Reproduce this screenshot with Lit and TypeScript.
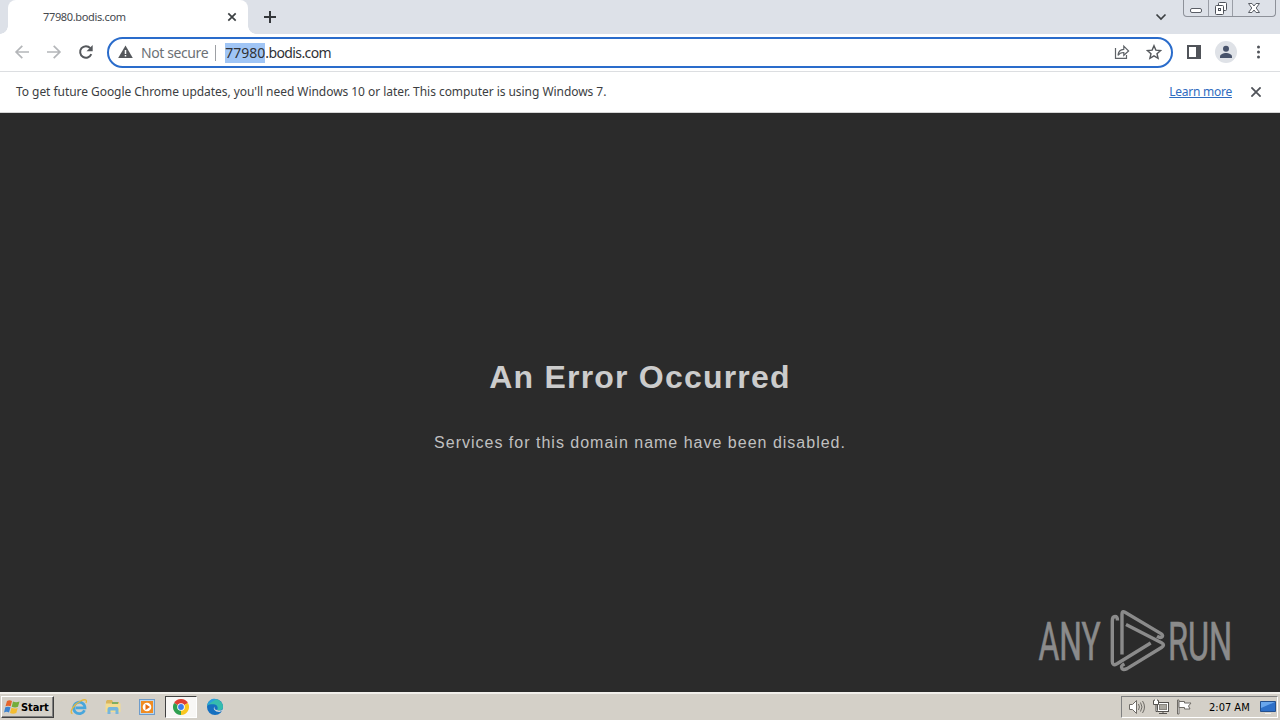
import {css, html, LitElement, svg} from "lit";
import {customElement} from "lit/decorators.js";

const HOST = "77980";
const DOMAIN = ".bodis.com";

const backIcon = svg`<path d="M15 8H2.5M8.3 1.8L2.1 8l6.2 6.2" fill="none" stroke="#b4b6b9" stroke-width="1.7"/>`;
const forwardIcon = svg`<path d="M1 8h12.5M7.7 1.8L13.9 8l-6.2 6.2" fill="none" stroke="#b4b6b9" stroke-width="1.7"/>`;
const reloadIcon = svg`
  <path d="M13.3 10.2A5.8 5.8 0 1 1 12.3 4.1" fill="none" stroke="#55585c" stroke-width="2"/>
  <path d="M14.7 1v6.2H8.5z" fill="#55585c"/>`;

@customElement("browser-tabs")
export class BrowserTabs extends LitElement {

  static styles = css`
    :host {
      display: flex;
      height: 34px;
      background: #dde1e8;
      font: 11px "Noto Sans", sans-serif;
      color: #45494e;
    }

    svg {
      display: block;
    }

    .tab {
      position: relative;
      display: flex;
      align-items: center;
      justify-content: space-between;
      box-sizing: border-box;
      width: 240px;
      margin-left: 8px;
      padding: 0 11px 0 35px;
      background: #fff;
      border-radius: 8px 8px 0 0;
      letter-spacing: -0.35px;
    }

    .tab span {
      margin-top: -2px;
    }

    /* outward curves at the foot of the tab */
    .tab::before,
    .tab::after {
      content: "";
      position: absolute;
      bottom: 0;
      width: 8px;
      height: 8px;
    }

    .tab::before {
      left: -8px;
      background: radial-gradient(circle at 0 0, #dde1e8 7.5px, #fff 8px);
    }

    .tab::after {
      right: -8px;
      background: radial-gradient(circle at 100% 0, #dde1e8 7.5px, #fff 8px);
    }

    .new-tab {
      margin: 11px 0 0 16px;
    }

    .chevron {
      margin: 13px 16px 0 auto;
    }

    .window-buttons {
      display: flex;
      box-sizing: border-box;
      width: 93px;
      height: 17px;
      margin-right: 4px;
      border: 1px solid #8d9199;
      border-top: 0;
      border-radius: 0 0 4px 4px;
    }

    .window-buttons div {
      display: flex;
      justify-content: center;
      width: 24px;
    }

    .window-buttons div + div {
      border-left: 1px solid #9a9ea6;
    }

    .window-buttons .close {
      width: 42px;
    }
  `;

  render() {
    return html`
      <div class="tab">
        <span>${HOST}${DOMAIN}</span>
        <svg width="10" height="10" viewBox="0 0 10 10">
          <path d="M1.3 1.3l7.4 7.4M8.7 1.3L1.3 8.7" stroke="#3c4043" stroke-width="1.7"/>
        </svg>
      </div>
      <svg class="new-tab" width="12" height="12" viewBox="0 0 12 12">
        <path d="M6 0v12M0 6h12" stroke="#34373b" stroke-width="2"/>
      </svg>
      <svg class="chevron" width="12" height="8" viewBox="0 0 12 8">
        <path d="M1.5 1.5L6 6l4.5-4.5" fill="none" stroke="#3c4043" stroke-width="1.7"/>
      </svg>
      <div class="window-buttons">
        <div>
          <svg width="14" height="16" viewBox="0 0 14 16">
            <rect x="1.5" y="8.5" width="11" height="4" rx="1.5" fill="#fff" stroke="#5a5e66"/>
          </svg>
        </div>
        <div>
          <svg width="14" height="16" viewBox="0 0 14 16" stroke="#4e525a">
            <rect x="4.5" y="2.5" width="8" height="8" rx="1" fill="#fff"/>
            <rect x="1.5" y="5.5" width="8" height="9" rx="1" fill="#fff"/>
            <rect x="4.5" y="8.5" width="2" height="2" fill="none"/>
          </svg>
        </div>
        <div class="close">
          <svg width="14" height="16" viewBox="0 0 14 16">
            <path d="M1.5 3.5H5L7 6l2-2.5h3.5L9.2 8l3.3 4.5H9L7 10l-2 2.5H1.5L4.8 8z"
                  fill="#fff" stroke="#5a5e66"/>
          </svg>
        </div>
      </div>
    `;
  }
}

@customElement("browser-toolbar")
export class BrowserToolbar extends LitElement {

  static styles = css`
    :host {
      display: flex;
      align-items: center;
      box-sizing: border-box;
      height: 38px;
      padding: 0 13px 0 14px;
      background: #fff;
      border-bottom: 1px solid #dcdee1;
      font: 14px "Noto Sans", sans-serif;
    }

    svg {
      display: block;
      flex: none;
    }

    .nav {
      display: flex;
      gap: 16px;
      margin: -2px 13px 0 0;
    }

    .address {
      display: flex;
      align-items: center;
      box-sizing: border-box;
      width: 1066px;
      height: 31px;
      padding: 0 9px;
      border: 2px solid #2a6ccb;
      border-radius: 16px;
      color: #303236;
    }

    .warning {
      margin: -2px 8px 0 0;
    }

    .security {
      color: #6d7175;
      letter-spacing: -0.4px;
    }

    .divider {
      width: 1px;
      height: 16px;
      margin: 0 9px 0 7px;
      background: #9da0a4;
    }

    .url {
      line-height: 20px;
      letter-spacing: -0.6px;
    }

    .selected {
      display: inline-block;
      background: #a0c5f5;
      letter-spacing: 0;
    }

    .share {
      margin: -2px 16px 0 auto;
    }

    .star {
      margin-top: -2px;
    }

    .side-panel {
      margin: -2px 14px 0;
    }

    .profile {
      margin-top: -2px;
    }

    .menu {
      margin: -1px 0 0 19px;
    }
  `;

  render() {
    return html`
      <div class="nav">
        <svg width="16" height="16" viewBox="0 0 16 16">${backIcon}</svg>
        <svg width="16" height="16" viewBox="0 0 16 16">${forwardIcon}</svg>
        <svg width="16" height="16" viewBox="0 0 16 16">${reloadIcon}</svg>
      </div>
      <div class="address">
        <svg class="warning" width="15" height="14" viewBox="0 0 15 14">
          <path d="M7.5 .5L14.8 13H.2z" fill="#55585c"/>
          <path d="M7.5 5v4M7.5 10v1.6" stroke="#fff" stroke-width="1.5"/>
        </svg>
        <span class="security">Not secure</span>
        <div class="divider"></div>
        <span class="url"><span class="selected">${HOST}</span>${DOMAIN}</span>
        <svg class="share" width="16" height="16" viewBox="0 0 16 16" fill="none" stroke="#5f6368" stroke-width="1.2">
          <path d="M1.5 4v10.4h11V11"/>
          <path d="M4 11.3C4.300 7.500 6 5.600 9.800 5.300V2.200L14.600 7l-4.800 4.300V8.500C7 8.400 5.300 9.300 4 11.300z"/>
        </svg>
        <svg class="star" width="16" height="16" viewBox="0 0 16 16">
          <path d="M8 1.700l1.850 4.400 4.800.4-3.650 3.150 1.100 4.700L8 11.850l-4.100 2.500 1.100-4.700L1.350 6.500l4.800-.4z"
                fill="none" stroke="#55585c" stroke-width="1.4"/>
        </svg>
      </div>
      <svg class="side-panel" width="14" height="14" viewBox="0 0 14 14">
        <path d="M0 0h14v14H0zM2 2v10h7V2z" fill="#505359" fill-rule="evenodd"/>
      </svg>
      <svg class="profile" width="22" height="22" viewBox="0 0 22 22">
        <circle cx="11" cy="11" r="11" fill="#dfe2e7"/>
        <circle cx="11" cy="7.8" r="3" fill="#48536b"/>
        <path d="M5 17v-1.500c0-2.300 3.500-3.500 6-3.500s6 1.200 6 3.500V17z" fill="#48536b"/>
      </svg>
      <svg class="menu" width="5" height="14" viewBox="0 0 5 14" fill="#505359">
        <circle cx="2.5" cy="2" r="1.5"/>
        <circle cx="2.5" cy="7" r="1.5"/>
        <circle cx="2.5" cy="12" r="1.5"/>
      </svg>
    `;
  }
}

@customElement("update-infobar")
export class UpdateInfobar extends LitElement {

  static styles = css`
    :host {
      display: flex;
      align-items: center;
      box-sizing: border-box;
      height: 41px;
      padding: 0 19px 1px 16px;
      background: #fff;
      border-bottom: 1px solid #d5d5d5;
      font: 12px "Noto Sans", sans-serif;
      color: #3c3e42;
    }

    .message {
      margin-top: -1px;
      letter-spacing: -0.05px;
      white-space: nowrap;
    }

    a {
      margin: -1px 19px 0 auto;
      color: #2f6cc0;
      letter-spacing: -0.25px;
      text-decoration: underline;
    }
  `;

  render() {
    return html`
      <span class="message">To get future Google Chrome updates, you'll need Windows 10 or later. This computer is using Windows 7.</span>
      <a>Learn more</a>
      <svg width="10" height="10" viewBox="0 0 10 10">
        <path d="M.4 .4l9.2 9.2M9.6 .4L.4 9.6" stroke="#505359" stroke-width="1.8"/>
      </svg>
    `;
  }
}

@customElement("error-page")
export class ErrorPage extends LitElement {

  static styles = css`
    :host {
      position: relative;
      display: flex;
      flex: 1;
      flex-direction: column;
      align-items: center;
      background: #2b2b2b;
      color: #ccc;
      font-family: "Liberation Sans", Arial, sans-serif;
    }

    h1 {
      margin: 245px 0 0;
      font-size: 32px;
      line-height: 38px;
      letter-spacing: 1.2px;
    }

    p {
      margin: 37px 0 0;
      color: #c0c0c0;
      font-size: 16px;
      line-height: 20px;
      letter-spacing: 1px;
    }

    /* sandbox watermark floats over the page */
    .watermark {
      position: absolute;
      right: 40px;
      bottom: 12px;
      overflow: visible;
      font-family: Roboto, sans-serif;
    }
  `;

  render() {
    return html`
      <h1>An Error Occurred</h1>
      <p>Services for this domain name have been disabled.</p>
      <svg class="watermark" width="210" height="80" viewBox="0 0 210 80" fill="#8b8b8b">
        <g font-size="53" stroke="#8b8b8b" stroke-width="0.7">
          <text transform="translate(8.5 60) scale(0.6 1)">ANY</text>
          <text transform="translate(138 60) scale(0.613 1)">RUN</text>
        </g>
        <g fill="none" stroke="#8b8b8b" stroke-width="3.4" stroke-linejoin="round">
          <path d="M92 54.5V14Q92 10.5 95 12.2L131 33.6Q134 35.8 131.5 37.3Q130 38 127 36.3"/>
          <path d="M96 24.4L131.5 42.8Q135.5 45 131.5 47.5L97 68.6Q92 71 91.5 67Q91.3 65.5 94.5 63.9"/>
          <path d="M120.7 43L87 63.8Q82.3 66.5 82.3 61.5V21Q82.3 16.5 85 16.5Q87.5 16.5 87.5 20.5"/>
        </g>
      </svg>
    `;
  }
}

@customElement("task-bar")
export class TaskBar extends LitElement {

  static styles = css`
    :host {
      display: flex;
      align-items: center;
      box-sizing: border-box;
      height: 28px;
      padding: 0 2px 0 1px;
      background: #d4d0c8;
      border-top: 2px solid #f1efeb;
      font: 11px "DejaVu Sans Condensed", "DejaVu Sans", sans-serif;
      color: #000;
    }

    svg {
      display: block;
    }

    .start {
      display: flex;
      align-items: center;
      box-sizing: border-box;
      width: 53px;
      height: 22px;
      padding-left: 2px;
      border: 1px solid;
      border-color: #fff #404040 #404040 #fff;
      box-shadow: inset -1px -1px #808080;
      font-weight: bold;
      letter-spacing: -0.1px;
    }

    .launchers {
      display: flex;
      align-items: center;
      margin-left: 8px;
    }

    .launcher {
      display: flex;
      justify-content: center;
      width: 34px;
    }

    .active {
      box-sizing: border-box;
      width: 32px;
      height: 22px;
      margin: 0 1px;
      padding-top: 2px;
      border: 1px solid;
      border-color: #404040 #fff #fff #404040;
      background: #f8f7f5;
    }

    .tray {
      display: flex;
      align-items: center;
      box-sizing: border-box;
      width: 157px;
      height: 22px;
      margin-left: auto;
      padding-left: 6px;
      border: 1px solid;
      border-color: #808080 #fff #fff #808080;
    }

    .tray svg + svg {
      margin-left: 7px;
    }

    .clock {
      margin: 0 10px 0 17px;
      white-space: nowrap;
    }
  `;

  render() {
    return html`
      <div class="start">
        <svg width="17" height="16" viewBox="0 0 17 16">
          <path d="M3 2Q5.500 .5 8 2L6.700 7.300Q4 6 1.500 7.300z" fill="#e5652b"/>
          <path d="M9 2.500Q12 4 15.500 2.500L14 7.800Q11 9 7.700 7.700z" fill="#74ad3a"/>
          <path d="M1.300 8.300Q4 7 6.500 8.300L5 13.500Q2.500 12 0 13.500z" fill="#3c83cf"/>
          <path d="M7.500 8.700Q10.500 10 13.700 8.900L12.300 14Q9 15.500 6 14z" fill="#f4bd31"/>
        </svg>
        <span>Start</span>
      </div>
      <div class="launchers">
        <!-- Internet Explorer -->
        <div class="launcher">
          <svg width="18" height="18" viewBox="0 0 18 18" fill="none">
            <path d="M14.500 12.300A5.700 5.700 0 1 1 15 9.800H5.500" stroke="#48a6dc" stroke-width="2.7"/>
            <path d="M2.500 15.500C-1.500 15 4 6 10.500 3 15 .8 17.500 1.500 16 5" stroke="#e6b83e" stroke-width="1.3"/>
          </svg>
        </div>
        <!-- Explorer -->
        <div class="launcher">
          <svg width="18" height="18" viewBox="0 0 18 18">
            <path d="M2 3.500l1-1.500h5l1 2h6v3H2z" fill="#d9b55c"/>
            <path d="M1.500 5.500h15V14h-15z" fill="#f3dd92"/>
            <path d="M8 4h6v2H8z" fill="#7fae62"/>
            <path d="M3.500 16v-5Q3.500 9 5.500 9h7q2 0 2 2v5h-3v-3.500h-5V16z" fill="#76b6dc"/>
          </svg>
        </div>
        <!-- Media Player -->
        <div class="launcher">
          <svg width="18" height="18" viewBox="0 0 18 18">
            <rect x="1.5" y="1.5" width="15" height="15" fill="#b9d6ee" stroke="#6e9ccb"/>
            <rect x="3" y="3" width="12" height="12" fill="#f08c22"/>
            <circle cx="9" cy="9" r="4.3" fill="#fff"/>
            <path d="M7.5 6l4.5 3-4.5 3z" fill="#e56d13"/>
          </svg>
        </div>
        <!-- Chrome -->
        <div class="launcher active">
          <svg width="16" height="16" viewBox="0 0 16 16">
            <path d="M8 8L1.070 4A8 8 0 0 1 14.930 4z" fill="#df4033"/>
            <path d="M8 8L14.930 4A8 8 0 0 1 8 16z" fill="#fac71f"/>
            <path d="M8 8v8A8 8 0 0 1 1.070 4z" fill="#2fa050"/>
            <circle cx="8" cy="8" r="3.8" fill="#fff"/>
            <circle cx="8" cy="8" r="2.9" fill="#3b7ded"/>
          </svg>
        </div>
        <!-- Edge -->
        <div class="launcher">
          <svg width="18" height="18" viewBox="0 0 18 18">
            <circle cx="9" cy="9" r="8" fill="#1670c0"/>
            <path d="M1.200 7.500C2.500 1 9-.5 13 2.200 16 4 17 6.500 17 9c0 3-3 4-6 3 1.500-2 .5-5.500-3-5.800-3-.2-5.500.3-6.800 1.300z" fill="#35bcae"/>
            <path d="M1.200 7.500C2.500 1 8 0 11 1.300 8 2.500 4 4.500 1.200 7.500z" fill="#2b9fdc"/>
            <path d="M11 12c-2 0-3-1.700-2.500-3.500C6.500 11 9 14 13.500 13.900L18 12V10.500c-1.500 2.300-5 2.500-7 1.500z" fill="#d4d8dc"/>
          </svg>
        </div>
      </div>
      <div class="tray">
        <svg width="18" height="16" viewBox="0 0 18 16" stroke="#6e6b66" fill="none">
          <path d="M1.500 5.500h3l4-4v13l-4-4h-3z" fill="#fff"/>
          <path d="M10.500 5q1.800 3 0 6M12.500 3.500q3 4.500 0 9M14.500 2q4 6 0 12"/>
        </svg>
        <svg width="16" height="16" viewBox="0 0 16 16" stroke="#55524e">
          <rect x="4.5" y="3.5" width="11" height="9" fill="#fff"/>
          <rect x="6.5" y="5.5" width="7" height="5" fill="#aaa79f" stroke="#88857f"/>
          <path d="M10 13v2M6 14.500h8" fill="none"/>
          <path d="M1.500 .5v1h-1v4h5v-4h-1v-1M3 6v6.500h1.500" fill="#fff"/>
        </svg>
        <svg width="16" height="16" viewBox="0 0 16 16" stroke="#6e6b66">
          <path d="M1.500 1v14h1.500V1z" fill="#fff"/>
          <path d="M3 2.500h5.500v1.500H15L12.500 7l1.500 3H8.500V8.500H3z" fill="#fff"/>
        </svg>
        <span class="clock">2:07 AM</span>
        <svg width="16" height="16" viewBox="0 0 16 16">
          <path d="M.5 2.500h15v10H.5z" fill="#2e70c8" stroke="#24508e"/>
          <path d="M1 3h14L1 9z" fill="#69a6ec"/>
          <path d="M5 14.500h6" stroke="#eee"/>
        </svg>
      </div>
    `;
  }
}

@customElement("app-root")
export class AppRoot extends LitElement {

  static styles = css`
    :host {
      display: flex;
      flex-direction: column;
      width: 1280px;
      height: 720px;
      overflow: hidden;
    }
  `;

  render() {
    return html`
      <browser-tabs></browser-tabs>
      <browser-toolbar></browser-toolbar>
      <update-infobar></update-infobar>
      <error-page></error-page>
      <task-bar></task-bar>
    `;
  }
}

declare global {
  interface HTMLElementTagNameMap {
    "browser-tabs": BrowserTabs;
    "browser-toolbar": BrowserToolbar;
    "update-infobar": UpdateInfobar;
    "error-page": ErrorPage;
    "task-bar": TaskBar;
    "app-root": AppRoot;
  }
}
